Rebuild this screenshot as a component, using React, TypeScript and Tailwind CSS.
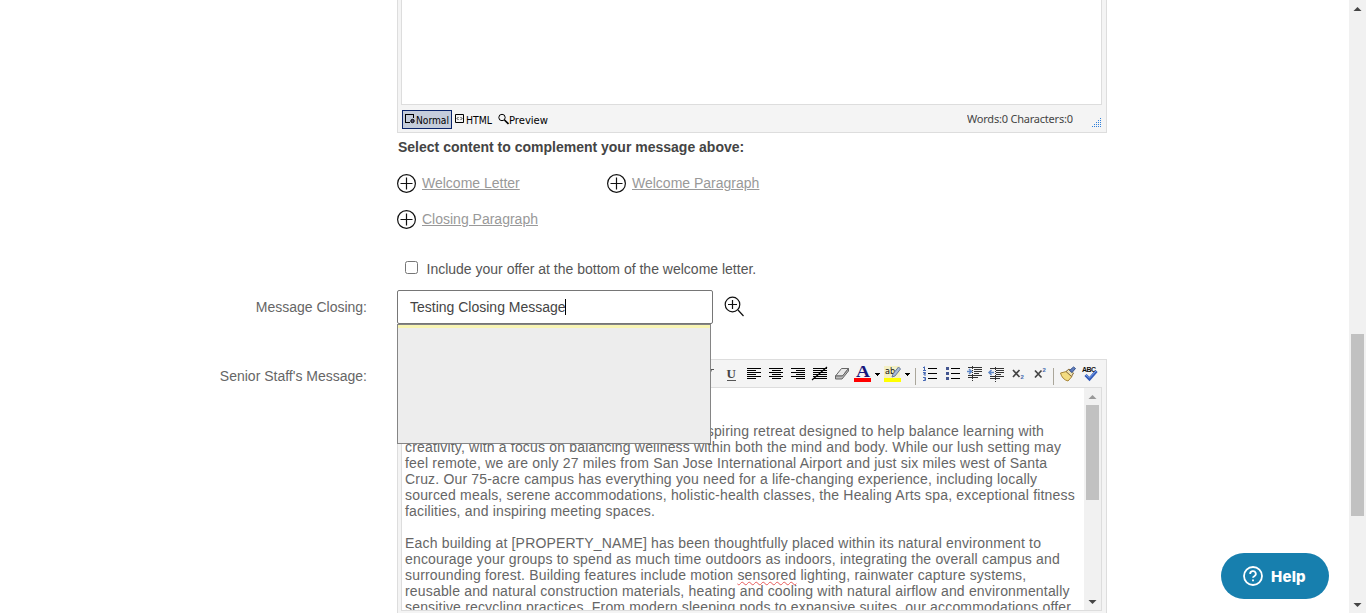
import React from "react";

const firstParagraph = [
  "[PROPERTY_NAME] is an inclusive, welcoming and inspiring retreat designed to help balance learning with",
  "creativity, with a focus on balancing wellness within both the mind and body. While our lush setting may",
  "feel remote, we are only 27 miles from San Jose International Airport and just six miles west of Santa",
  "Cruz. Our 75-acre campus has everything you need for a life-changing experience, including locally",
  "sourced meals, serene accommodations, holistic-health classes, the Healing Arts spa, exceptional fitness",
  "facilities, and inspiring meeting spaces.",
];

function PlusCircle() {
  return (
    <svg width="19" height="19" viewBox="0 0 19 19" fill="none" stroke="#111" strokeWidth="1.2" className="shrink-0">
      <circle cx="9.5" cy="9.5" r="8.9" />
      <path d="M9.5 3.5v12M3.5 9.5h12" />
    </svg>
  );
}

function ContentLink({ children }: { children: string }) {
  return (
    <div className="flex h-9 w-[210px] items-center gap-[6px]">
      <PlusCircle />
      <a className="whitespace-nowrap text-[#999] underline">{children}</a>
    </div>
  );
}

function Tool({ children }: { children: React.ReactNode }) {
  return (
    <svg width="22" height="22" viewBox="0 0 22 22" fill="none" stroke="#000" className="shrink-0">
      {children}
    </svg>
  );
}

function Caret() {
  return (
    <svg width="8" height="22" viewBox="0 0 8 22" shapeRendering="crispEdges" className="shrink-0">
      <path d="M1 10h5v1H1zM2 11h3v1H2zM3 12h1v1H3z" />
    </svg>
  );
}

function Divider({ className }: { className: string }) {
  return <div className={"h-[17px] w-px shrink-0 bg-[#aaa69a] " + className} />;
}

function Toolbar() {
  return (
    <div className="flex h-[27px] shrink-0 items-center pl-[300px] pt-px">
      <Tool>
        <path d="M9 6.500h7M13.500 6.500l-3 9M8 15.500h5" stroke="#555" />
      </Tool>
      <Tool>
        <text x="6.500" y="15" fontFamily="Liberation Serif, serif" fontWeight="700" fontSize="13" fill="#444" stroke="none">U</text>
        <path d="M7 17.500h9" stroke="#555" />
      </Tool>
      <Tool><path shapeRendering="crispEdges" d="M5 5.500h14M5 7.500h9M5 9.500h14M5 11.500h9M5 13.500h14M5 15.500h9" /></Tool>
      <Tool><path shapeRendering="crispEdges" d="M5 5.500h14M8 7.500h9M5 9.500h14M8 11.500h9M5 13.500h14M8 15.500h9" /></Tool>
      <Tool><path shapeRendering="crispEdges" d="M5 5.500h14M10 7.500h9M5 9.500h14M10 11.500h9M5 13.500h14M10 15.500h9" /></Tool>
      <Tool><path shapeRendering="crispEdges" d="M5 5.500h14M5 7.500h14M5 9.500h14M5 11.500h14M5 13.500h14M5 15.500h14" /><path d="M4 17 19 4" strokeWidth="1.1" /></Tool>
      <Tool>
        <path d="M5.500 13 11.500 5.500h7L12.500 13z" fill="#e8e8e8" stroke="#666" />
        <path d="M5.500 13v3h6.500l6.500-8V5.500L12.500 13z" fill="#bbb" stroke="#666" />
      </Tool>
      <Tool>
        <text x="4" y="14" fontFamily="Liberation Serif, serif" fontWeight="700" fontSize="17" textLength="14" lengthAdjust="spacingAndGlyphs" fill="#17177c" stroke="none">A</text>
        <path d="M2 15h17v4H2z" fill="#f00" stroke="none" />
      </Tool>
      <Caret />
      <Tool>
        <path d="M2 3h16v12H2z" fill="#f4f0c4" stroke="none" />
        <text x="3" y="10.500" fontFamily="DejaVu Sans Condensed, DejaVu Sans, sans-serif" fontSize="9" fill="#111" stroke="none">ab</text>
        <path d="m16.500 4 2 2-5.500 7-3 1 1-3z" fill="#a9bbd8" stroke="#68799b" />
        <path d="M2 15h17v4H2z" fill="#ff0" stroke="none" />
      </Tool>
      <Caret />
      <Divider className="mt-1 ml-[3px] mr-[3px]" />
      <Tool>
        <path d="M9 5.500h9M9 10.500h9M9 15.500h9" shapeRendering="crispEdges" />
        <path d="M5.500 3.500v4M4 7.500h3M4 4.500h1M4 9.500h2.500v1H5v1.500h2M4 14.500h2.500v3H4M5 16h2" stroke="#4568b5" />
      </Tool>
      <Tool>
        <path d="M10 5.500h9M10 10.500h9M10 15.500h9" shapeRendering="crispEdges" />
        <path d="M5 4h3v3H5zM5 9h3v3H5zM5 14h3v3H5z" fill="#43558f" stroke="none" />
      </Tool>
      <Tool>
        <path d="M5 4.500h14M11 6.500h8M11 8.500h8M11 10.500h5M5 12.500h14M5 14.500h10" stroke="#333" shapeRendering="crispEdges" />
        <path d="M9.500 3v15" strokeDasharray="1 1" stroke="#333" />
        <path d="M4 8.500h4.500M6 6l2.500 2.500L6 11" stroke="#5f87c6" strokeWidth="1.500" />
      </Tool>
      <Tool>
        <path d="M5 5.500h14M11 7.500h8M11 9.500h8M11 11.500h5M5 13.500h14M5 15.500h10" stroke="#333" shapeRendering="crispEdges" />
        <path d="M10.500 4v15" strokeDasharray="1 1" stroke="#333" />
        <path d="M4 9.500h5M6.500 7 4 9.500 6.500 12" stroke="#5f87c6" strokeWidth="1.500" />
      </Tool>
      <Tool>
        <path d="m6 7 6.500 7M12.500 7 6 14" stroke="#444" strokeWidth="1.700" />
        <text x="13.500" y="16" fontFamily="Liberation Sans, sans-serif" fontWeight="700" fontSize="6" fill="#4569ad" stroke="none">2</text>
      </Tool>
      <Tool>
        <path d="m6 7.500 6.500 7M12.500 7.500 6 14.500" stroke="#444" strokeWidth="1.700" />
        <text x="13.500" y="8.500" fontFamily="Liberation Sans, sans-serif" fontWeight="700" fontSize="6" fill="#4569ad" stroke="none">2</text>
      </Tool>
      <Divider className="mt-1 ml-[2px] mr-[3px]" />
      <Tool>
        <path d="m3.500 10 6-1.500 5.500 5-4 4.500c-4-1-6.500-4-7.500-8z" fill="#f3dc81" stroke="#a78435" />
        <path d="m9 8.500 3-2.500 4.500 4-2 3.500z" fill="#eee1b1" stroke="#866a39" />
        <path d="m12.500 7.500 4-3.500 2 1.500-3.500 4z" fill="#617dbb" stroke="#35528f" />
      </Tool>
      <Tool>
        <text x="3" y="9" fontFamily="Liberation Sans, sans-serif" fontWeight="700" fontSize="7" textLength="14" fill="#111" stroke="none">ABC</text>
        <path d="m6.500 12 4 4L17.500 8" stroke="#345bb9" strokeWidth="3" />
        <path d="m7 12 3.500 3L17 8" stroke="#79a4ea" strokeWidth="1" />
      </Tool>
    </div>
  );
}

function EditorFooter() {
  return (
    <div className="flex h-[27px] items-center text-[11px] text-black" style={{ fontFamily: "'DejaVu Sans Condensed', 'Noto Sans', sans-serif" }}>
      <div className="ml-[1px] mt-[1px] flex h-[19px] w-[50px] items-center border border-[#0a246a] bg-[#c5cddb] pl-[2px]">
        <svg width="11" height="12" viewBox="0 0 11 12" fill="none" stroke="#000" className="-mt-px shrink-0">
          <path d="M5 9.500H.5v-8h8V5" shapeRendering="crispEdges" /><circle cx="7.500" cy="8" r="1.700" fill="#557" />
        </svg>
        <svg width="34" height="16" className="shrink-0 overflow-visible"><text x="0" y="13" fontSize="11" textLength="33" lengthAdjust="spacingAndGlyphs">Normal</text></svg>
      </div>
      <div className="ml-[3px] mt-[1px] flex w-[43px] items-center gap-[2px]">
        <svg width="9" height="12" viewBox="0 0 9 12" fill="none" stroke="#000" className="shrink-0">
          <path d="M.5 1.500h8v8h-8z" /><path d="M3.500 4 2 5.500 3.500 7M5.500 4 7 5.500 5.500 7" strokeWidth=".8" />
        </svg>
        <svg width="28" height="16" className="shrink-0"><text x="0" y="13" fontSize="11" textLength="26" lengthAdjust="spacingAndGlyphs">HTML</text></svg>
      </div>
      <div className="mt-[1px] flex items-center">
        <svg width="11" height="12" viewBox="0 0 11 12" fill="none" stroke="#000" className="shrink-0">
          <circle cx="4" cy="4.500" r="3.200" /><path d="m6.500 7 4 4" strokeWidth="1.700" />
        </svg>
        <svg width="41" height="16" className="shrink-0"><text x="0" y="13" fontSize="11" textLength="39" lengthAdjust="spacingAndGlyphs">Preview</text></svg>
      </div>
      <div className="ml-auto mr-[19px] text-[#444]">
        <svg width="106" height="16" fill="currentColor"><text x="0" y="12" fontFamily="Noto Sans, sans-serif" fontSize="11" textLength="106">Words:0 Characters:0</text></svg>
      </div>
      <svg width="10" height="10" viewBox="0 0 10 10" className="mt-[8px] shrink-0" fill="#2f80dc" shapeRendering="crispEdges">
        <path d="M8 0h1v1H8zM6 2h1v1H6zM8 2h1v1H8zM4 4h1v1H4zM6 4h1v1H6zM8 4h1v1H8zM2 6h1v1H2zM4 6h1v1H4zM6 6h1v1H6zM8 6h1v1H8zM0 8h1v1H0zM2 8h1v1H2zM4 8h1v1H4zM6 8h1v1H6zM8 8h1v1H8z" />
      </svg>
    </div>
  );
}

function MessageText() {
  return (
    <div className="min-w-0 flex-1 overflow-hidden whitespace-nowrap bg-white pl-[3px] pt-[35px] text-[14px] leading-4 tracking-[0.178px] text-[#666]">
      {firstParagraph.map((line, i) => (
        <div key={line} className={i === 0 ? "mr-[40px] flex justify-end" : ""}>{line}</div>
      ))}
      <div className="mt-4">Each building at [PROPERTY_NAME] has been thoughtfully placed within its natural environment to</div>
      <div>encourage your groups to spend as much time outdoors as indoors, integrating the overall campus and</div>
      <div>surrounding forest. Building features include motion <span className="underline decoration-[#e65a5a] decoration-wavy decoration-1">sensored</span> lighting, rainwater capture systems,</div>
      <div>reusable and natural construction materials, heating and cooling with natural airflow and environmentally</div>
      <div>sensitive recycling practices. From modern sleeping pods to expansive suites, our accommodations offer</div>
    </div>
  );
}

function Arrow({ up = false, color }: { up?: boolean; color: string }) {
  return (
    <svg width="17" height="17" viewBox="0 0 17 17" fill={color} className="shrink-0">
      <path d={up ? "M4.500 11h8l-4-4z" : "M4.500 7h8l-4 4z"} />
    </svg>
  );
}

export default function App() {
  return (
    <div className="flex h-[613px] w-[1366px] overflow-hidden bg-white text-[14px] leading-4 text-[#555]" style={{ fontFamily: "'Liberation Sans', Arial, sans-serif" }}>
      <main className="relative flex min-w-0 flex-1 flex-col">
        <section className="ml-[397px] flex h-[133px] w-[710px] shrink-0 flex-col border-x border-b border-[#ddd] bg-[#f4f4f4] pl-[3px] pr-[4px]">
          <div className="h-[105px] border-x border-b border-[#ddd] bg-white" />
          <EditorFooter />
        </section>
        <div className="ml-[397px] h-[157px] w-[710px] shrink-0">
          <h2 className="ml-px mt-[6px] font-bold text-[#444]">Select content to complement your message above:</h2>
          <div className="mt-[10px] flex w-[420px] flex-wrap">
            <ContentLink>Welcome Letter</ContentLink>
            <ContentLink>Welcome Paragraph</ContentLink>
            <ContentLink>Closing Paragraph</ContentLink>
          </div>
          <label className="mt-[23px] flex items-start">
            <input type="checkbox" className="ml-2 mt-[1px] h-[13px] w-[13px]" />
            <span className="ml-[8.500px] mt-px">Include your offer at the bottom of the welcome letter.</span>
          </label>
        </div>
        <div className="flex h-[69px] shrink-0 items-start">
          <div className="mt-[9px] w-[367px] text-right text-[#666]">Message Closing:</div>
          <div className="relative ml-[30px]">
            <div className="flex h-[34px] w-[316px] items-center rounded-[2px] border border-[#767676] bg-white pl-3 text-[#444]">
              <span>Testing Closing Message</span>
              <span className="-ml-px h-4 w-px bg-black" />
            </div>
            <div className="absolute left-0 top-[34px] z-10 h-[120px] w-[314px] border border-[#858585] bg-[#ededed]">
              <div className="h-[3px] bg-[#f8f5b4]" />
            </div>
          </div>
          <svg width="21" height="21" viewBox="0 0 21 21" fill="none" stroke="#111" strokeWidth="1.2" className="ml-[11px] mt-[6px]">
            <circle cx="8.500" cy="8.500" r="7.300" /><path d="M8.500 4v9M4 8.500h9M14 14l5.500 6" />
          </svg>
        </div>
        <div className="flex h-[254px] shrink-0 items-start">
          <div className="mt-[9px] w-[367px] text-right text-[#666]">Senior Staff's Message:</div>
          <section className="ml-[30px] flex h-[254px] w-[710px] flex-col border-x border-t border-[#ddd] bg-[#f4f4f4]">
            <Toolbar />
            <div className="ml-[3px] mr-[4px] flex h-[224px] overflow-hidden border border-[#ddd]">
              <MessageText />
              <div className="flex w-[17px] shrink-0 flex-col items-center bg-[#f1f1f1]">
                <Arrow up color="#999" />
                <div className="h-[95px] w-[13px] bg-[#c1c1c1]" />
                <div className="flex-1" />
                <Arrow color="#444" />
              </div>
            </div>
          </section>
        </div>
        <button className="absolute left-[1221px] top-[553px] flex h-[46px] w-[108px] items-center rounded-full bg-[#177fae] pl-[22px] text-white">
          <svg width="20" height="20" viewBox="0 0 20 20" fill="none" stroke="#fff" strokeWidth="1.800">
            <circle cx="10" cy="10" r="9" /><path d="M7.200 8a2.800 2.700 0 1 1 4.100 2.200c-.9.500-1.300.8-1.300 1.600" /><path d="M10 13.500v1.800" />
          </svg>
          <span className="ml-2 mt-px text-[15px] font-extrabold tracking-[0.2px]" style={{ fontFamily: "Inter, sans-serif" }}>Help</span>
        </button>
      </main>
      <div className="flex w-[17px] shrink-0 flex-col items-center bg-[#f1f1f1]">
        <Arrow up color="#444" />
        <div className="mt-[317px] h-[182px] w-[13px] bg-[#c1c1c1]" />
        <div className="flex-1" />
        <Arrow color="#444" />
      </div>
    </div>
  );
}
